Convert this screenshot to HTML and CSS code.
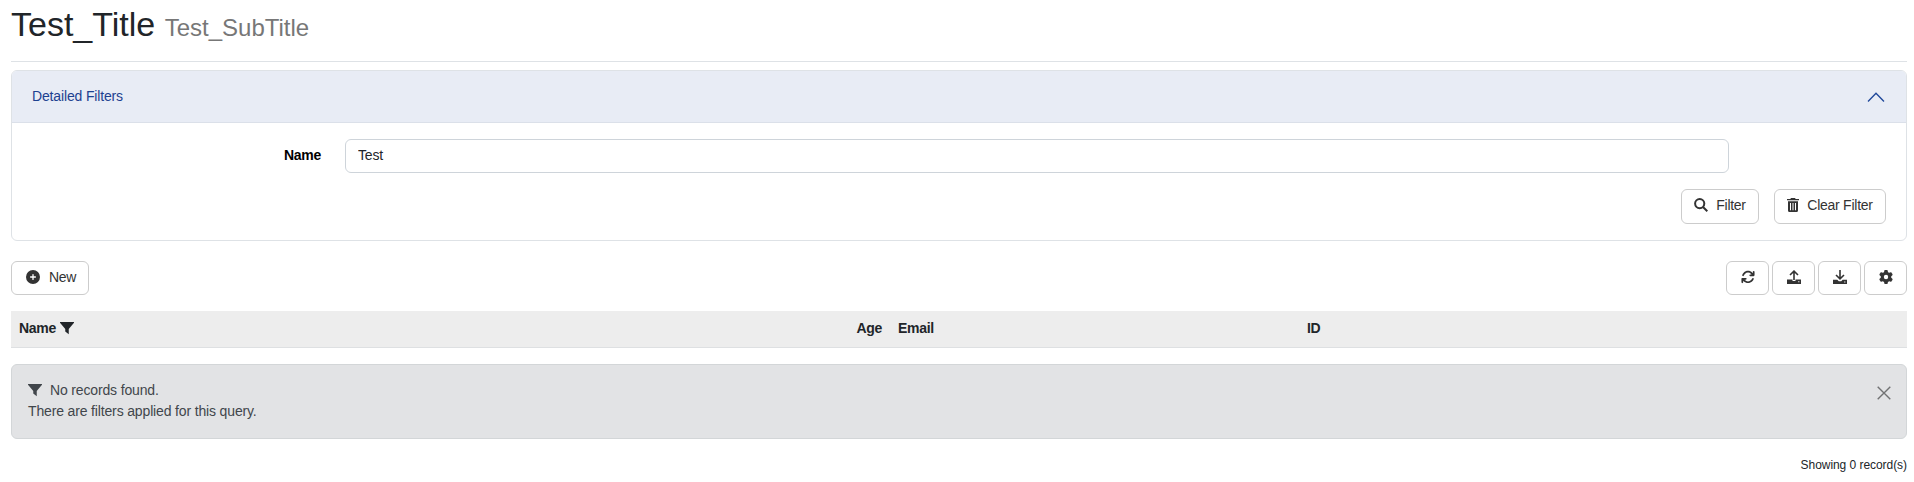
FILE: index.html
```html
<!DOCTYPE html>
<html lang="en">
<head>
<meta charset="utf-8">
<title>Test_Title</title>
<link rel="stylesheet" href="styles.css">
</head>
<body>
<svg class="defs" aria-hidden="true">
  <symbol id="funnel" viewBox="0 0 512 512"><path d="M0 32H512V64L320 288V480L192 384V288L0 64z"/></symbol>
</svg>
<header class="page-header">
  <h1>Test_Title <small>Test_SubTitle</small></h1>
</header>
<main>
  <section class="panel">
    <div class="panel-header">
      <span>Detailed Filters</span>
      <svg class="chevron" viewBox="0 0 16 16"><path d="M.9 12 8 4.600 15.100 12"/></svg>
    </div>
    <div class="panel-body">
      <div class="field">
        <label for="name">Name</label>
        <input id="name" type="text" value="Test">
      </div>
      <div class="filter-actions">
        <button class="btn btn-filter"><svg class="icon" viewBox="0 0 14 14"><path fill="none" stroke="currentColor" stroke-width="2" d="M1.100 5.600a4.600 4.600 0 1 0 9.200 0a4.600 4.600 0 1 0-9.200 0M9 9l4.300 4.300"/></svg>Filter</button>
        <button class="btn btn-clear"><svg class="icon trash" viewBox="0 0 12 14"><path fill-rule="evenodd" d="M4 0H8L8.700 1H12V2.300H0V1H3.300zM1 3.300H11V12.500Q11 14 9.500 14H2.500Q1 14 1 12.500zM3 5V12.200H4V5zM5.500 5V12.200H6.500V5zM8 5V12.200H9V5z"/></svg>Clear Filter</button>
      </div>
    </div>
  </section>
  <div class="toolbar">
    <button class="btn btn-new"><svg class="icon" viewBox="0 0 512 512"><path d="M256 512A256 256 0 1 0 256 0a256 256 0 1 0 0 512zM232 344V280H168c-13.300 0-24-10.700-24-24s10.700-24 24-24h64V168c0-13.300 10.700-24 24-24s24 10.700 24 24v64h64c13.300 0 24 10.700 24 24s-10.700 24-24 24H280v64c0 13.300-10.700 24-24 24s-24-10.700-24-24z"/></svg>New</button>
    <div class="tools">
      <button class="btn tool" aria-label="Refresh"><svg class="icon" viewBox="0 0 512 512"><path d="M105.100 202.600c7.700-21.800 20.200-42.300 37.800-59.800c62.500-62.500 163.800-62.500 226.300 0L386.300 160H336c-17.700 0-32 14.300-32 32s14.300 32 32 32H463.500c17.700 0 32-14.300 32-32V64c0-17.700-14.300-32-32-32s-32 14.300-32 32v51.200L414.400 97.600c-87.500-87.500-229.300-87.500-316.800 0C73.200 122 55.600 150.700 44.800 181.400c-5.900 16.700 2.900 34.900 19.500 40.800s34.900-2.900 40.800-19.500zM39 289.300c-5 1.500-9.800 4.200-13.700 8.200c-4 4-6.700 8.800-8.100 14c-.8 2.800-1.200 5.600-1.200 8.600V448c0 17.700 14.300 32 32 32s32-14.300 32-32V396.900l17.600 17.500c87.500 87.400 229.300 87.400 316.700 0c24.400-24.400 42.100-53.100 52.900-83.700c5.900-16.700-2.900-34.900-19.500-40.800s-34.900 2.900-40.800 19.500c-7.700 21.800-20.200 42.300-37.800 59.800c-62.500 62.500-163.800 62.500-226.300 0L125.600 352H176c17.700 0 32-14.300 32-32s-14.300-32-32-32H48c-3 0-6 .4-9 1.300z"/></svg></button>
      <button class="btn tool" aria-label="Upload"><svg class="icon" viewBox="0 0 14 14"><path fill="none" stroke="currentColor" stroke-width="1.600" d="M7 10V1.300M3 5l4-3.900L11 5"/><path fill-rule="evenodd" d="M0 9.500H5.500V11H8.500V9.500H14V14H0zM11.200 11.300V12.300H12.400V11.300z"/></svg></button>
      <button class="btn tool" aria-label="Download"><svg class="icon" viewBox="0 0 14 14"><path fill="none" stroke="currentColor" stroke-width="1.600" d="M7 0V8.700M3 5l4 3.900L11 5"/><path fill-rule="evenodd" d="M0 9.800H4.300L5.800 11.200H8.200L9.700 9.800H14V14H0zM11.200 11.500V12.500H12.400V11.500z"/></svg></button>
      <button class="btn tool" aria-label="Settings"><svg class="icon" viewBox="0 0 512 512"><path d="M495.900 166.600c3.200 8.700.5 18.400-6.400 24.600l-43.300 39.400c1.100 8.300 1.700 16.800 1.700 25.400s-.6 17.100-1.700 25.400l43.300 39.400c6.900 6.200 9.600 15.900 6.400 24.600c-4.400 11.900-9.700 23.300-15.800 34.300l-4.700 8.100c-6.600 11-14 21.400-22.100 31.200c-5.900 7.200-15.700 9.600-24.500 6.800l-55.700-17.700c-13.400 10.300-28.200 18.900-44 25.400l-12.500 57.100c-2 9.100-9 16.300-18.200 17.800c-13.800 2.300-28 3.500-42.500 3.500s-28.700-1.200-42.500-3.500c-9.200-1.500-16.200-8.700-18.200-17.800l-12.500-57.100c-15.800-6.500-30.600-15.100-44-25.400L83.100 425.900c-8.800 2.800-18.600.3-24.500-6.800c-8.100-9.800-15.500-20.200-22.100-31.200l-4.700-8.100c-6.100-11-11.400-22.400-15.800-34.300c-3.200-8.700-.5-18.400 6.400-24.600l43.300-39.400C64.600 273.100 64 264.600 64 256s.6-17.100 1.700-25.400L22.400 191.200c-6.900-6.200-9.600-15.900-6.400-24.600c4.400-11.900 9.700-23.300 15.800-34.300l4.700-8.100c6.600-11 14-21.400 22.100-31.200c5.900-7.200 15.700-9.600 24.500-6.800l55.700 17.700c13.400-10.300 28.200-18.900 44-25.400l12.500-57.100c2-9.100 9-16.300 18.200-17.800C227.300 1.200 241.500 0 256 0s28.700 1.200 42.500 3.500c9.200 1.500 16.200 8.700 18.200 17.800l12.500 57.100c15.800 6.500 30.600 15.100 44 25.400l55.700-17.700c8.800-2.800 18.600-.3 24.500 6.800c8.100 9.800 15.500 20.200 22.100 31.200l4.700 8.100c6.100 11 11.400 22.400 15.800 34.300zM256 336a80 80 0 1 0 0-160 80 80 0 1 0 0 160z"/></svg></button>
    </div>
  </div>
  <div class="grid-head">
    <div>Name <svg class="icon"><use href="#funnel"/></svg></div>
    <div class="num">Age</div>
    <div>Email</div>
    <div>ID</div>
  </div>
  <div class="alert">
    <div>
      <p><svg class="icon"><use href="#funnel"/></svg>No records found.</p>
      <p>There are filters applied for this query.</p>
    </div>
    <svg class="close" viewBox="0 0 14 14"><path d="M.7.7l12.600 12.600M13.300.7.7 13.300"/></svg>
  </div>
  <footer>Showing 0 record(s)</footer>
</main>
</body>
</html>
```
FILE: styles.css
```css
* { box-sizing: border-box; }
body {
  margin: 0;
  padding: 0 7px 0 11px;
  font: 14px/21px "Liberation Sans", Arial, sans-serif;
  letter-spacing: -.15px;
  color: #212529;
  background: #fff;
}
h1, p { margin: 0; }
.defs { position: absolute; width: 0; height: 0; }
.page-header { height: 62px; border-bottom: 1px solid #dee2e6; }
h1 { padding-top: 4px; font-size: 34px; font-weight: 400; line-height: 40px; letter-spacing: 0; }
h1 small { font-size: 24px; color: #777; }
.icon { width: 14px; height: 14px; fill: currentColor; flex: none; margin-bottom: 1px; }

.panel { height: 171px; margin-top: 8px; border: 1px solid #dee2e6; border-radius: 6px; overflow: hidden; }
.panel-header {
  display: flex; justify-content: space-between; align-items: center;
  height: 52px; padding: 0 20px;
  background: #e8ecf5; color: #1d4190; border-bottom: 1px solid #dbe0e9;
}
.chevron { width: 18px; height: 18px; margin-right: 1px; fill: none; stroke: #20489a; stroke-width: 1.200; }
.panel-body { padding: 16px 20px; }
.field { display: flex; align-items: center; }
.field label { width: 289px; margin-right: 24px; padding-bottom: 2px; text-align: right; font-weight: 700; letter-spacing: -.3px; color: #000; }
.field input {
  width: 1384px; height: 34px; padding: 0 12px 2px;
  border: 1px solid #ced4da; border-radius: 6px;
  font: inherit; letter-spacing: inherit; color: #212529;
}
.filter-actions { display: flex; justify-content: flex-end; gap: 15px; margin-top: 16px; }
.btn {
  display: flex; align-items: center; justify-content: center; gap: 8px;
  height: 35px; padding: 0 12px 2px;
  border: 1px solid #ccc; border-radius: 6px;
  background: #fff; color: #333; font: inherit; letter-spacing: inherit; white-space: nowrap;
}
.btn-filter { width: 78px; letter-spacing: -.3px; }
.btn-clear { width: 112px; letter-spacing: -.25px; }
.trash { width: 12px; }

.toolbar { display: flex; justify-content: space-between; margin-top: 20px; }
.toolbar .btn { height: 34px; }
.toolbar .btn-new { width: 78px; padding-left: 14px; gap: 9px; letter-spacing: -.3px; }
.tools { display: flex; gap: 3px; }
.toolbar .tool { width: 43px; padding: 0 0 2px; }

.grid-head {
  display: grid; grid-template-columns: 439px 440px 409px 1fr; align-items: center;
  height: 37px; margin-top: 16px; padding-bottom: 1px;
  background: #ededed; border-bottom: 1px solid #dee0e2; font-weight: 700; letter-spacing: -.3px;
}
.grid-head div { display: flex; align-items: center; gap: 4px; padding: 0 8px; }
.grid-head .num { justify-content: flex-end; }

.alert {
  display: flex; justify-content: space-between;
  height: 75px; margin-top: 16px; padding: 15px 15px 15px 16px;
  background: #e2e3e5; border: 1px solid #d3d6d8; border-radius: 6px; color: #41464b;
}
.alert p { display: flex; align-items: center; gap: 8px; }
.close { width: 14px; height: 14px; margin-top: 6px; fill: none; stroke: #717273; stroke-width: 1.400; }
footer { margin-top: 16px; text-align: right; font-size: 12px; letter-spacing: -.05px; }
```
